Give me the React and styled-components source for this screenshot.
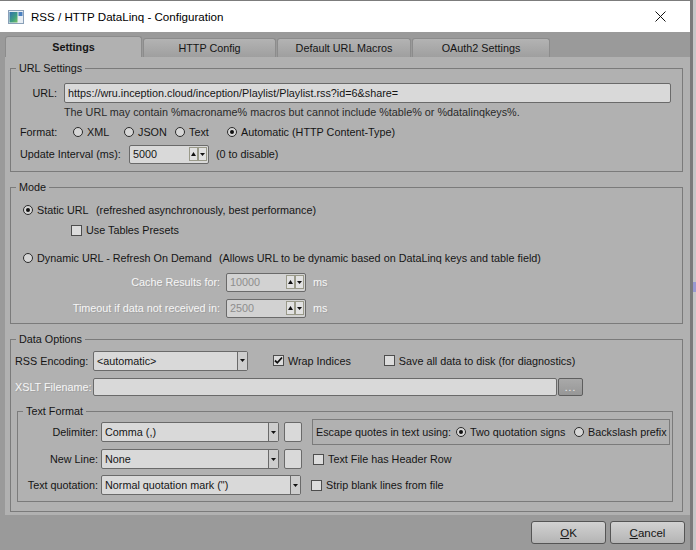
import React from 'react'
import styled, { createGlobalStyle } from 'styled-components'

const GlobalStyle = createGlobalStyle`
  html, body { margin: 0; padding: 0; background: #9a9a9a; }
  body {
    font-family: "Liberation Sans", Arial, sans-serif;
    font-size: 10.8px;
    color: #151515;
  }
  * { box-sizing: border-box; }
`

const Screen = styled.div`
  display: flex;
  width: 696px;
  height: 550px;
  overflow: hidden;
`
const Window = styled.div`
  width: 690px;
  display: flex;
  flex-direction: column;
  border-top: 1px solid #7c7c7c;
`
const Backdrop = styled.div`
  flex: 1;
  border-left: 3px solid #7a7a7a;
  background: linear-gradient(#c6c6c6 0, #c6c6c6 282px, #9a9ad0 282px, #9a9ad0 292px, #c6c6c6 292px);
`
const TitleBar = styled.div`
  height: 31px;
  background: #fff;
  display: flex;
  align-items: center;
  padding-left: 8px;
`
const Title = styled.span`
  font-size: 11.6px;
  margin-left: 7px;
  color: #000;
`
const Close = styled.div`
  margin-left: auto;
  width: 60px;
  height: 31px;
  display: flex;
  align-items: center;
  justify-content: center;
`
const Body = styled.div`
  flex: 1;
  display: flex;
  flex-direction: column;
  background: #9a9a9a;
  padding: 4px 0 0 5px;
`
const Tabs = styled.div`
  display: flex;
  align-items: flex-end;
  height: 21px;
  gap: 1px;
`
const Tab = styled.div`
  width: ${p => p.$w}px;
  height: ${p => (p.$active ? 21 : 19)}px;
  display: flex;
  align-items: center;
  justify-content: center;
  border: 1px solid #8c8c8c;
  border-bottom: none;
  border-radius: 3px 3px 0 0;
  font-weight: ${p => (p.$active ? 'bold' : 'normal')};
  background: ${p => (p.$active ? '#b1b1b1' : 'linear-gradient(#b3b3b3, #9f9f9f)')};
`
const Panel = styled.div`
  width: 685px;
  height: 458px;
  background: #b1b1b1;
  padding: 5px 7px 0 5px;
  display: flex;
  flex-direction: column;
  gap: ${p => p.$gap}px;
`
const Group = styled.fieldset`
  margin: ${p => p.$margin || '0'};
  padding: 0;
  border: 1px solid #7b7b7b;
  min-width: 0;
`
const Legend = styled.legend`
  margin-left: 5px;
  padding: 0 3px;
  line-height: 13px;
`
const Content = styled.div`
  padding: ${p => p.$pad};
  display: flex;
  flex-direction: column;
`
const Row = styled.div`
  display: flex;
  align-items: center;
  height: ${p => p.$h}px;
  margin-top: ${p => p.$mt || 0}px;
  margin-left: ${p => p.$ml || 0}px;
`
const Label = styled.span`
  width: ${p => (p.$w ? `${p.$w}px` : 'auto')};
  flex: none;
  text-align: ${p => (p.$right ? 'right' : 'left')};
  margin-right: ${p => p.$gap || 0}px;
  white-space: nowrap;
  color: ${p => (p.$disabled ? '#f6f6f6' : 'inherit')};
  text-shadow: ${p => (p.$disabled ? '1px 1px 0 #a2a2a2' : 'none')};
`
const TextInput = styled.div`
  width: ${p => p.$w}px;
  height: ${p => p.$h || 19}px;
  border: 1px solid #6a6a6a;
  border-radius: 2px;
  background: #d9d9d9;
  display: flex;
  align-items: center;
  padding-left: 3px;
  white-space: nowrap;
  overflow: hidden;
`
const SpinBox = styled.div`
  width: 80px;
  height: 19px;
  border: 1px solid #6a6a6a;
  border-radius: 2px;
  background: ${p => (p.$disabled ? '#d2d2d2' : '#d9d9d9')};
  color: ${p => (p.$disabled ? '#8d8d8d' : 'inherit')};
  display: flex;
  align-items: center;
  padding: 0 1px 0 3px;
  margin-right: 7px;
`
const SpinText = styled.span`
  flex: 1;
`
const SpinBtn = styled.div`
  width: 9px;
  height: 14px;
  border: 1px solid #9a9a8a;
  background: #e2e2e2;
  display: flex;
  align-items: center;
  justify-content: center;
`
const Combo = styled.div`
  width: ${p => p.$w}px;
  height: 20px;
  border: 1px solid #6a6a6a;
  border-radius: 2px;
  background: #d9d9d9;
  display: flex;
  align-items: stretch;
  flex: none;
`
const ComboText = styled.span`
  flex: 1;
  display: flex;
  align-items: center;
  padding-left: 3px;
  white-space: nowrap;
`
const ComboArrow = styled.span`
  width: 10px;
  border-left: 1px solid #6a6a6a;
  background: #cdcdcd;
  display: flex;
  align-items: center;
  justify-content: center;
`
const SmallBox = styled.div`
  width: 18px;
  height: 20px;
  border: 1px solid #6a6a6a;
  border-radius: 2px;
  background: #d9d9d9;
  margin-left: 5px;
  flex: none;
`
const Browse = styled.div`
  width: 25px;
  height: 18px;
  margin-left: 1px;
  border: 1px solid #5e5e5e;
  border-radius: 2px;
  background: linear-gradient(#a9a9a9, #979797);
  color: #f2f2f2;
  display: flex;
  align-items: flex-end;
  justify-content: center;
  padding-bottom: 3px;
  font-size: 10px;
  letter-spacing: 1px;
  line-height: 8px;
`
const Item = styled.label`
  display: flex;
  align-items: center;
  width: ${p => (p.$w ? `${p.$w}px` : 'auto')};
  flex: none;
  white-space: nowrap;
  margin-right: ${p => p.$mr || 0}px;
  margin-left: ${p => p.$ml || 0}px;
`
const RadioCircle = styled.span`
  width: 10px;
  height: 10px;
  border-radius: 50%;
  border: 1px solid #2a2a2a;
  background: #d6d6d6;
  margin-right: 4px;
  display: flex;
  align-items: center;
  justify-content: center;
  flex: none;
  &::after {
    content: '';
    display: ${p => (p.$on ? 'block' : 'none')};
    width: 4px;
    height: 4px;
    border-radius: 50%;
    background: #111;
  }
`
const CheckBox = styled.span`
  width: 11px;
  height: 11px;
  border: 1px solid #4d4d4d;
  background: #dcdcdc;
  margin-right: 4px;
  flex: none;
  display: flex;
  align-items: center;
  justify-content: center;
`
const Hint = styled.span`
  color: ${p => (p.$muted ? '#2a2a2a' : 'inherit')};
  margin-left: ${p => p.$ml || 0}px;
  white-space: nowrap;
`
const EscapeBox = styled.div`
  width: 358px;
  height: 26px;
  margin-left: 10px;
  border: 1px solid #7b7b7b;
  display: flex;
  align-items: center;
  padding-left: 3px;
  flex: none;
  overflow: hidden;
`
const Footer = styled.div`
  flex: 1;
  display: flex;
  justify-content: flex-end;
  align-items: flex-start;
  gap: 4px;
  padding: 6px 5px 0 0;
`
const Button = styled.div`
  width: 75px;
  height: 23px;
  border: 1px solid #555;
  border-radius: 3px;
  background: linear-gradient(#d2d2d2, #b4b4b4);
  display: flex;
  align-items: center;
  justify-content: center;
  font-size: 11.5px;
  & u { text-decoration: underline; }
`

const Up = () => (
  <svg width="5" height="4" viewBox="0 0 5 4"><path d="M2.5 0L5 4H0z" fill="#111" /></svg>
)
const Down = () => (
  <svg width="5" height="3" viewBox="0 0 5 3"><path d="M0 0h5L2.5 3z" fill="#111" /></svg>
)
const Tick = () => (
  <svg width="9" height="9" viewBox="0 0 9 9">
    <path d="M1 4.5l2.3 2.3L8 1.5" fill="none" stroke="#111" strokeWidth="1.8" />
  </svg>
)

const Radio = ({ on, w, mr, children }) => (
  <Item $w={w} $mr={mr}>
    <RadioCircle $on={on} />
    {children}
  </Item>
)
const Check = ({ on, ml, children }) => (
  <Item $ml={ml}>
    <CheckBox>{on && <Tick />}</CheckBox>
    {children}
  </Item>
)
const Spinner = ({ value, disabled }) => (
  <SpinBox $disabled={disabled}>
    <SpinText>{value}</SpinText>
    <SpinBtn><Up /></SpinBtn>
    <SpinBtn><Down /></SpinBtn>
  </SpinBox>
)
const Select = ({ w, children }) => (
  <Combo $w={w}>
    <ComboText>{children}</ComboText>
    <ComboArrow><Down /></ComboArrow>
  </Combo>
)

const AppIcon = () => (
  <svg width="16" height="14" viewBox="0 0 16 14">
    <defs>
      <linearGradient id="ic" x1="0" y1="0" x2="1" y2="1">
        <stop offset="0" stopColor="#2f6fb0" />
        <stop offset="0.6" stopColor="#3fa080" />
        <stop offset="1" stopColor="#7ac060" />
      </linearGradient>
    </defs>
    <rect x="0.5" y="0.5" width="15" height="13" fill="#e8eef4" stroke="#8aa0b8" />
    <rect x="1.5" y="2" width="8" height="10.5" fill="url(#ic)" />
    <rect x="10.5" y="2" width="4" height="4" fill="#4a80c0" />
  </svg>
)

export default function App() {
  return (
    <Screen>
      <GlobalStyle />
      <Window>
        <TitleBar>
          <AppIcon />
          <Title>RSS / HTTP DataLinq - Configuration</Title>
          <Close>
            <svg width="11" height="11" viewBox="0 0 11 11">
              <path d="M0.5 0.5l10 10M10.5 0.5l-10 10" stroke="#111" strokeWidth="1" />
            </svg>
          </Close>
        </TitleBar>
        <Body>
          <Tabs>
            <Tab $w={137} $active>Settings</Tab>
            <Tab $w={133}>HTTP Config</Tab>
            <Tab $w={134}>Default URL Macros</Tab>
            <Tab $w={138}>OAuth2 Settings</Tab>
          </Tabs>
          <Panel $gap={9}>
            <Group>
              <Legend>URL Settings</Legend>
              <Content $pad="7px 0 6px 9px">
                <Row $h={21}>
                  <Label $w={37} $right $gap={7}>URL:</Label>
                  <TextInput $w={607} $h={20}>https://wru.inception.cloud/inception/Playlist/Playlist.rss?id=6&amp;share=</TextInput>
                </Row>
                <Row $h={18}>
                  <Hint $ml={44} $muted>The URL may contain %macroname% macros but cannot include %table% or %datalinqkeys%.</Hint>
                </Row>
                <Row $h={22}>
                  <Label $w={53}>Format:</Label>
                  <Radio w={51}>XML</Radio>
                  <Radio w={51}>JSON</Radio>
                  <Radio w={52}>Text</Radio>
                  <Radio on>Automatic (HTTP Content-Type)</Radio>
                </Row>
                <Row $h={22}>
                  <Label $w={104} $gap={5}>Update Interval (ms):</Label>
                  <Spinner value="5000" />
                  <Hint>(0 to disable)</Hint>
                </Row>
              </Content>
            </Group>

            <Group>
              <Legend>Mode</Legend>
              <Content $pad="6px 0 5px 12px">
                <Row $h={20}>
                  <Radio on w={73}>Static URL</Radio>
                  <Hint>(refreshed asynchronously, best performance)</Hint>
                </Row>
                <Row $h={20} $ml={48}>
                  <Check>Use Tables Presets</Check>
                </Row>
                <Row $h={20} $mt={8}>
                  <Radio w={196}>Dynamic URL - Refresh On Demand</Radio>
                  <Hint>(Allows URL to be dynamic based on DataLinq keys and table field)</Hint>
                </Row>
                <Row $h={20} $mt={4}>
                  <Label $w={197} $right $gap={6} $disabled>Cache Results for:</Label>
                  <Spinner value="10000" disabled />
                  <Label $disabled>ms</Label>
                </Row>
                <Row $h={20} $mt={6}>
                  <Label $w={197} $right $gap={6} $disabled>Timeout if data not received in:</Label>
                  <Spinner value="2500" disabled />
                  <Label $disabled>ms</Label>
                </Row>
              </Content>
            </Group>

            <Group>
              <Legend>Data Options</Legend>
              <Content $pad="4px 0 9px 4px">
                <Row $h={21}>
                  <Label $w={73} $right $gap={5}>RSS Encoding:</Label>
                  <Select w={155}>&lt;automatic&gt;</Select>
                  <Check on ml={25}>Wrap Indices</Check>
                  <Check ml={33}>Save all data to disk (for diagnostics)</Check>
                </Row>
                <Row $h={20} $mt={6}>
                  <Label $w={73} $right $gap={5} $disabled>XSLT Filename:</Label>
                  <TextInput $w={464} $h={18} />
                  <Browse>...</Browse>
                </Row>
                <Group $margin="8px 9px 0 2px">
                  <Legend>Text Format</Legend>
                  <Content $pad="1px 0 5px 4px">
                    <Row $h={26}>
                      <Label $w={76} $right $gap={3}>Delimiter:</Label>
                      <Select w={178}>Comma (,)</Select>
                      <SmallBox />
                      <EscapeBox>
                        <Label $w={140}>Escape quotes in text using:</Label>
                        <Radio on w={118}>Two quotation signs</Radio>
                        <Radio>Backslash prefix</Radio>
                      </EscapeBox>
                    </Row>
                    <Row $h={22} $mt={3}>
                      <Label $w={76} $right $gap={3}>New Line:</Label>
                      <Select w={178}>None</Select>
                      <SmallBox />
                      <Check ml={11}>Text File has Header Row</Check>
                    </Row>
                    <Row $h={22} $mt={4}>
                      <Label $w={76} $right $gap={3}>Text quotation:</Label>
                      <Select w={200}>Normal quotation mark (")</Select>
                      <Check ml={10}>Strip blank lines from file</Check>
                    </Row>
                  </Content>
                </Group>
              </Content>
            </Group>
          </Panel>
          <Footer>
            <Button><u>O</u>K</Button>
            <Button><u>C</u>ancel</Button>
          </Footer>
        </Body>
      </Window>
      <Backdrop />
    </Screen>
  )
}
